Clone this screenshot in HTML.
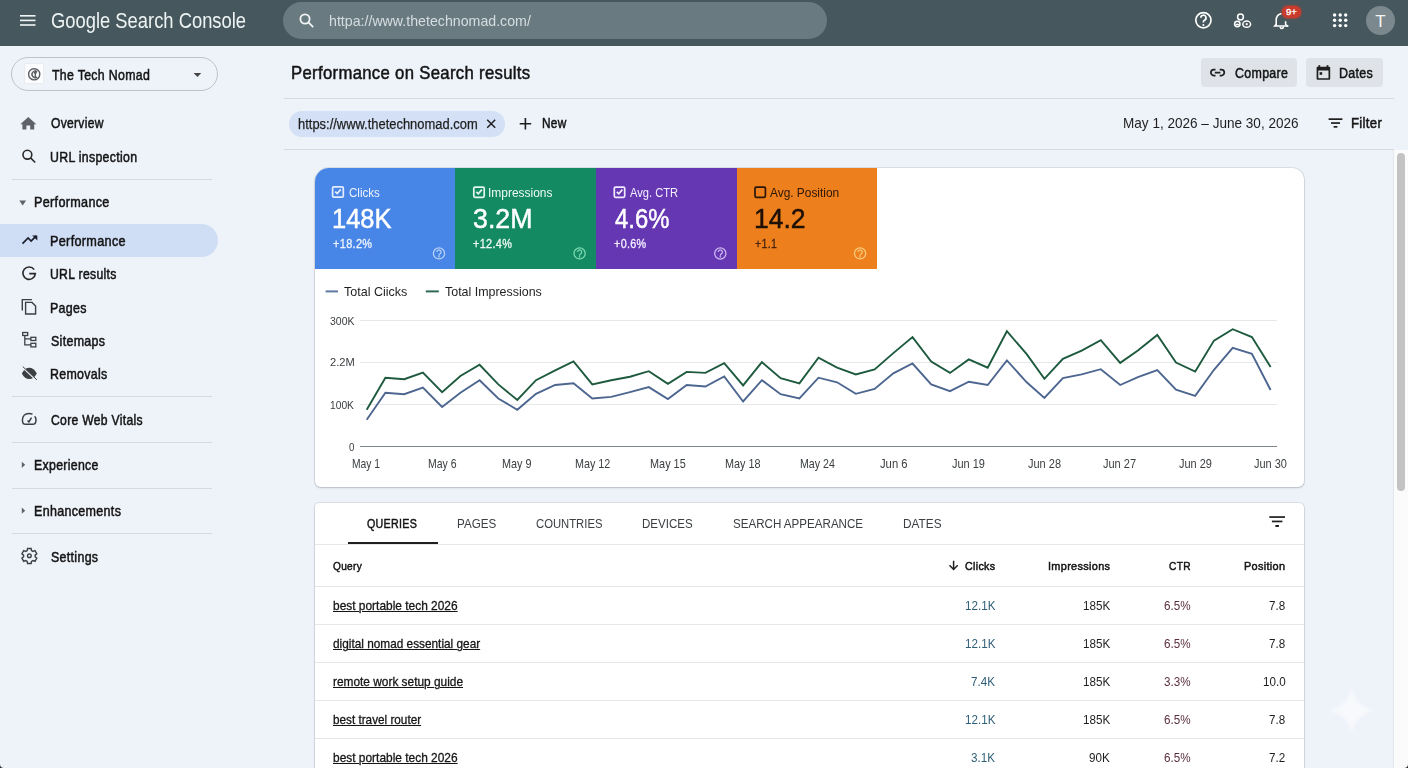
<!DOCTYPE html>
<html><head><meta charset="utf-8">
<style>
*{box-sizing:border-box;margin:0;padding:0}
html,body{width:1408px;height:768px;overflow:hidden}
body{background:#eef2f9;font-family:"Liberation Sans",sans-serif;color:#1f1f1f;position:relative}
.b{position:absolute}
.t{position:absolute;white-space:nowrap;transform-origin:0 0}
.dv{position:absolute;height:1px;background:#d6d9de}
.rl{position:absolute;left:315px;width:989px;height:1px;background:#e6e6e6}
#ov{position:absolute;left:0;top:0}
</style></head><body>
<!-- top bar -->
<div class="b" style="left:0;top:0;width:1408px;height:46px;background:#46585e"></div>
<div class="b" style="left:283px;top:2px;width:544px;height:37px;border-radius:18.5px;background:#697b80"></div>
<div class="b" style="left:1282px;top:5.5px;width:19px;height:12.5px;border-radius:6.5px;background:#c93b2d;box-shadow:0 0 1.5px 1px rgba(201,59,45,.6)"></div>
<div class="b" style="left:1366px;top:6px;width:29px;height:29px;border-radius:50%;background:#7b898e"></div>

<!-- sidebar -->
<div class="b" style="left:11px;top:57px;width:207px;height:34px;border:1px solid #bfc3c8;border-radius:17px"></div>
<div class="b" style="left:25px;top:64px;width:18px;height:19px;background:#fbfcfe;box-shadow:0 0 0 .5px #e4e7ec"></div>
<div class="b" style="left:0;top:224px;width:218px;height:33px;background:#d0def5;border-radius:0 16.5px 16.5px 0"></div>
<div class="dv" style="left:12px;top:179px;width:200px"></div>
<div class="dv" style="left:12px;top:396px;width:200px"></div>
<div class="dv" style="left:12px;top:442px;width:200px"></div>
<div class="dv" style="left:12px;top:488px;width:200px"></div>
<div class="dv" style="left:12px;top:533px;width:200px"></div>

<!-- header -->
<div class="b" style="left:1200.5px;top:58.3px;width:96px;height:29px;background:#dfe3e8;border-radius:4px"></div>
<div class="b" style="left:1306px;top:58.3px;width:76.5px;height:29px;background:#dfe3e8;border-radius:4px"></div>
<div class="dv" style="left:284px;top:98px;width:1110px"></div>
<div class="b" style="left:289px;top:111px;width:216px;height:26px;background:#d3e0f5;border-radius:13px"></div>
<div class="dv" style="left:284px;top:149px;width:1110px"></div>

<!-- scrollbar -->
<div class="b" style="left:1393px;top:150px;width:15px;height:618px;background:#fbfbfb;border-left:1px solid #e4e6e9"></div>
<div class="b" style="left:1397px;top:153px;width:8px;height:338px;background:#c3c3c3;border-radius:4px"></div>

<!-- chart card -->
<div class="b" style="left:315px;top:168px;width:989px;height:319px;background:#fff;border-radius:14px 12px 6px 6px;box-shadow:0 0 0 1px rgba(60,64,67,.10),0 1px 2px rgba(60,64,67,.22);overflow:hidden">
  <div class="b" style="left:0;top:0;width:140px;height:101px;background:#4785e6"></div>
  <div class="b" style="left:140px;top:0;width:141px;height:101px;background:#138a62"></div>
  <div class="b" style="left:281px;top:0;width:141px;height:101px;background:#6537b3"></div>
  <div class="b" style="left:422px;top:0;width:140px;height:101px;background:#ed7f1c"></div>
</div>

<!-- table card -->
<div class="b" style="left:315px;top:503px;width:989px;height:300px;background:#fff;border-radius:4px 5px 0 0;box-shadow:0 0 0 1px rgba(60,64,67,.10),0 1px 2px rgba(60,64,67,.22)"></div>
<div class="b" style="left:348px;top:541.6px;width:90px;height:2.6px;background:#1f1f1f"></div>
<div class="rl" style="top:544px"></div>
<div class="rl" style="top:586px"></div>
<div class="rl" style="top:624px"></div>
<div class="rl" style="top:662px"></div>
<div class="rl" style="top:700px"></div>
<div class="rl" style="top:738px"></div>

<div class="t" style="left:50.87px;top:9.98px;font-size:22.24px;line-height:22.24px;font-weight:normal;color:#eef3f3;transform:scaleX(0.8262);">Google Search Console</div>
<div class="t" style="left:329.38px;top:12.86px;font-size:15.41px;line-height:15.41px;font-weight:normal;color:#d6dde0;transform:scaleX(0.9208);">httpa://www.thetechnomad.com/</div>
<div class="t" style="left:52.30px;top:67.74px;font-size:14.24px;line-height:14.24px;font-weight:normal;color:#141414;transform:scaleX(0.8677);-webkit-text-stroke:0.5px #141414;letter-spacing:0.35px;">The Tech Nomad</div>
<div class="t" style="left:50.65px;top:116.30px;font-size:14.53px;line-height:14.53px;font-weight:normal;color:#141414;transform:scaleX(0.8328);-webkit-text-stroke:0.5px #141414;letter-spacing:0.35px;">Overview</div>
<div class="t" style="left:49.80px;top:149.80px;font-size:14.53px;line-height:14.53px;font-weight:normal;color:#141414;transform:scaleX(0.8493);-webkit-text-stroke:0.5px #141414;letter-spacing:0.35px;">URL inspection</div>
<div class="t" style="left:34.19px;top:195.69px;font-size:13.95px;line-height:13.95px;font-weight:normal;color:#141414;transform:scaleX(0.9051);-webkit-text-stroke:0.5px #141414;letter-spacing:0.35px;">Performance</div>
<div class="t" style="left:49.80px;top:233.87px;font-size:14.10px;line-height:14.10px;font-weight:normal;color:#141414;transform:scaleX(0.8984);-webkit-text-stroke:0.5px #141414;letter-spacing:0.35px;">Performance</div>
<div class="t" style="left:49.83px;top:266.97px;font-size:14.10px;line-height:14.10px;font-weight:normal;color:#141414;transform:scaleX(0.8658);-webkit-text-stroke:0.5px #141414;letter-spacing:0.35px;">URL results</div>
<div class="t" style="left:49.82px;top:300.57px;font-size:14.10px;line-height:14.10px;font-weight:normal;color:#141414;transform:scaleX(0.8838);-webkit-text-stroke:0.5px #141414;letter-spacing:0.35px;">Pages</div>
<div class="t" style="left:50.70px;top:333.57px;font-size:14.10px;line-height:14.10px;font-weight:normal;color:#141414;transform:scaleX(0.8822);-webkit-text-stroke:0.5px #141414;letter-spacing:0.35px;">Sitemaps</div>
<div class="t" style="left:49.82px;top:366.77px;font-size:14.10px;line-height:14.10px;font-weight:normal;color:#141414;transform:scaleX(0.8797);-webkit-text-stroke:0.5px #141414;letter-spacing:0.35px;">Removals</div>
<div class="t" style="left:50.70px;top:412.77px;font-size:14.10px;line-height:14.10px;font-weight:normal;color:#141414;transform:scaleX(0.8627);-webkit-text-stroke:0.5px #141414;letter-spacing:0.35px;">Core Web Vitals</div>
<div class="t" style="left:33.73px;top:458.47px;font-size:14.10px;line-height:14.10px;font-weight:normal;color:#141414;transform:scaleX(0.8742);-webkit-text-stroke:0.5px #141414;letter-spacing:0.35px;">Experience</div>
<div class="t" style="left:33.71px;top:504.27px;font-size:14.10px;line-height:14.10px;font-weight:normal;color:#141414;transform:scaleX(0.8881);-webkit-text-stroke:0.5px #141414;letter-spacing:0.35px;">Enhancements</div>
<div class="t" style="left:50.70px;top:549.57px;font-size:14.10px;line-height:14.10px;font-weight:normal;color:#141414;transform:scaleX(0.8821);-webkit-text-stroke:0.5px #141414;letter-spacing:0.35px;">Settings</div>
<div class="t" style="left:290.88px;top:64.32px;font-size:18.17px;line-height:18.17px;font-weight:normal;color:#141414;transform:scaleX(0.9197);-webkit-text-stroke:0.5px #141414;letter-spacing:0.35px;">Performance on Search results</div>
<div class="t" style="left:1234.50px;top:65.84px;font-size:14.24px;line-height:14.24px;font-weight:normal;color:#141414;transform:scaleX(0.8728);-webkit-text-stroke:0.5px #141414;letter-spacing:0.35px;">Compare</div>
<div class="t" style="left:1339.12px;top:65.84px;font-size:14.24px;line-height:14.24px;font-weight:normal;color:#141414;transform:scaleX(0.8754);-webkit-text-stroke:0.5px #141414;letter-spacing:0.35px;">Dates</div>
<div class="t" style="left:297.70px;top:116.74px;font-size:14.24px;line-height:14.24px;font-weight:normal;color:#1f1f1f;transform:scaleX(0.9084);-webkit-text-stroke:0.25px #1f1f1f">https://www.thetechnomad.com</div>
<div class="t" style="left:541.65px;top:116.99px;font-size:13.95px;line-height:13.95px;font-weight:normal;color:#141414;transform:scaleX(0.8521);-webkit-text-stroke:0.5px #141414;letter-spacing:0.35px;">New</div>
<div class="t" style="left:1122.69px;top:115.83px;font-size:14.97px;line-height:14.97px;font-weight:normal;color:#1f1f1f;transform:scaleX(0.9056);">May 1, 2026 – June 30, 2026</div>
<div class="t" style="left:1350.72px;top:115.83px;font-size:14.97px;line-height:14.97px;font-weight:normal;color:#141414;transform:scaleX(0.8816);-webkit-text-stroke:0.5px #141414;letter-spacing:0.35px;">Filter</div>
<div class="t" style="left:348.75px;top:185.98px;font-size:13.08px;line-height:13.08px;font-weight:normal;color:#eef4ff;transform:scaleX(0.8844);">Clicks</div>
<div class="t" style="left:332.40px;top:204.36px;font-size:28.34px;line-height:28.34px;font-weight:normal;color:#ffffff;transform:scaleX(0.8994);-webkit-text-stroke:0.5px #fff">148K</div>
<div class="t" style="left:332.65px;top:238.19px;font-size:12.06px;line-height:12.06px;font-weight:normal;color:#eef4ff;transform:scaleX(0.9102);-webkit-text-stroke:0.5px #eef4ff;letter-spacing:0.35px;-webkit-text-stroke-width:0.3px">+18.2%</div>
<div class="t" style="left:488.49px;top:185.98px;font-size:13.08px;line-height:13.08px;font-weight:normal;color:#eefaf4;transform:scaleX(0.9148);">Impressions</div>
<div class="t" style="left:472.80px;top:204.60px;font-size:28.05px;line-height:28.05px;font-weight:normal;color:#ffffff;transform:scaleX(0.9543);-webkit-text-stroke:0.5px #fff">3.2M</div>
<div class="t" style="left:473.40px;top:238.19px;font-size:12.06px;line-height:12.06px;font-weight:normal;color:#eefaf4;transform:scaleX(0.9044);-webkit-text-stroke:0.5px #eefaf4;letter-spacing:0.35px;-webkit-text-stroke-width:0.3px">+12.4%</div>
<div class="t" style="left:629.80px;top:186.23px;font-size:13.08px;line-height:13.08px;font-weight:normal;color:#f4efff;transform:scaleX(0.8500);">Avg. CTR</div>
<div class="t" style="left:614.50px;top:204.82px;font-size:27.62px;line-height:27.62px;font-weight:normal;color:#ffffff;transform:scaleX(0.8640);-webkit-text-stroke:0.5px #fff">4.6%</div>
<div class="t" style="left:614.00px;top:238.19px;font-size:12.06px;line-height:12.06px;font-weight:normal;color:#f4efff;transform:scaleX(0.8982);-webkit-text-stroke:0.5px #f4efff;letter-spacing:0.35px;-webkit-text-stroke-width:0.3px">+0.6%</div>
<div class="t" style="left:770.00px;top:186.23px;font-size:13.08px;line-height:13.08px;font-weight:normal;color:#2b1608;transform:scaleX(0.9087);">Avg. Position</div>
<div class="t" style="left:753.88px;top:204.82px;font-size:27.62px;line-height:27.62px;font-weight:normal;color:#1e1006;transform:scaleX(0.9607);-webkit-text-stroke:0.5px #1e1006">14.2</div>
<div class="t" style="left:754.70px;top:238.19px;font-size:12.06px;line-height:12.06px;font-weight:normal;color:#4a2410;transform:scaleX(0.8833);-webkit-text-stroke:0.5px #4a2410;letter-spacing:0.35px;-webkit-text-stroke-width:0.3px">+1.1</div>
<div class="t" style="left:344.30px;top:285.28px;font-size:13.37px;line-height:13.37px;font-weight:normal;color:#1f1f1f;transform:scaleX(0.9370);">Total Ciicks</div>
<div class="t" style="left:445.40px;top:285.28px;font-size:13.37px;line-height:13.37px;font-weight:normal;color:#1f1f1f;transform:scaleX(0.9313);">Total Impressions</div>
<div class="t" style="left:329.50px;top:315.55px;font-size:11.05px;line-height:11.05px;font-weight:normal;color:#3c4043;transform:scaleX(0.9468);">300K</div>
<div class="t" style="left:329.60px;top:357.45px;font-size:11.05px;line-height:11.05px;font-weight:normal;color:#3c4043;transform:scaleX(1.0068);">2.2M</div>
<div class="t" style="left:329.60px;top:399.65px;font-size:11.05px;line-height:11.05px;font-weight:normal;color:#3c4043;transform:scaleX(0.9278);">100K</div>
<div class="t" style="left:348.80px;top:441.65px;font-size:11.05px;line-height:11.05px;font-weight:normal;color:#3c4043;transform:scaleX(0.8833);">0</div>
<div class="t" style="left:352.00px;top:457.79px;font-size:12.06px;line-height:12.06px;font-weight:normal;color:#3c4043;transform:scaleX(0.8548);">May 1</div>
<div class="t" style="left:427.60px;top:457.79px;font-size:12.06px;line-height:12.06px;font-weight:normal;color:#3c4043;transform:scaleX(0.8699);">May 6</div>
<div class="t" style="left:502.20px;top:457.79px;font-size:12.06px;line-height:12.06px;font-weight:normal;color:#3c4043;transform:scaleX(0.9002);">May 9</div>
<div class="t" style="left:574.60px;top:457.79px;font-size:12.06px;line-height:12.06px;font-weight:normal;color:#3c4043;transform:scaleX(0.8944);">May 12</div>
<div class="t" style="left:649.70px;top:457.79px;font-size:12.06px;line-height:12.06px;font-weight:normal;color:#3c4043;transform:scaleX(0.9044);">May 15</div>
<div class="t" style="left:725.00px;top:457.79px;font-size:12.06px;line-height:12.06px;font-weight:normal;color:#3c4043;transform:scaleX(0.8994);">May 18</div>
<div class="t" style="left:800.40px;top:457.79px;font-size:12.06px;line-height:12.06px;font-weight:normal;color:#3c4043;transform:scaleX(0.8843);">May 24</div>
<div class="t" style="left:879.60px;top:457.79px;font-size:12.06px;line-height:12.06px;font-weight:normal;color:#3c4043;transform:scaleX(0.9338);">Jun 6</div>
<div class="t" style="left:952.30px;top:457.79px;font-size:12.06px;line-height:12.06px;font-weight:normal;color:#3c4043;transform:scaleX(0.9103);">Jun 19</div>
<div class="t" style="left:1027.70px;top:457.79px;font-size:12.06px;line-height:12.06px;font-weight:normal;color:#3c4043;transform:scaleX(0.9131);">Jun 28</div>
<div class="t" style="left:1103.10px;top:457.79px;font-size:12.06px;line-height:12.06px;font-weight:normal;color:#3c4043;transform:scaleX(0.9131);">Jun 27</div>
<div class="t" style="left:1178.60px;top:457.79px;font-size:12.06px;line-height:12.06px;font-weight:normal;color:#3c4043;transform:scaleX(0.9103);">Jun 29</div>
<div class="t" style="left:1254.00px;top:457.79px;font-size:12.06px;line-height:12.06px;font-weight:normal;color:#3c4043;transform:scaleX(0.9103);">Jun 30</div>
<div class="t" style="left:367.40px;top:517.23px;font-size:13.66px;line-height:13.66px;font-weight:normal;color:#141414;transform:scaleX(0.7832);-webkit-text-stroke:0.5px #141414;letter-spacing:0.35px;">QUERIES</div>
<div class="t" style="left:456.83px;top:517.48px;font-size:13.37px;line-height:13.37px;font-weight:normal;color:#3c4043;transform:scaleX(0.8701);">PAGES</div>
<div class="t" style="left:536.00px;top:517.48px;font-size:13.37px;line-height:13.37px;font-weight:normal;color:#3c4043;transform:scaleX(0.8443);">COUNTRIES</div>
<div class="t" style="left:642.24px;top:517.48px;font-size:13.37px;line-height:13.37px;font-weight:normal;color:#3c4043;transform:scaleX(0.8642);">DEVICES</div>
<div class="t" style="left:732.80px;top:517.48px;font-size:13.37px;line-height:13.37px;font-weight:normal;color:#3c4043;transform:scaleX(0.8674);">SEARCH APPEARANCE</div>
<div class="t" style="left:902.52px;top:517.48px;font-size:13.37px;line-height:13.37px;font-weight:normal;color:#3c4043;transform:scaleX(0.8842);">DATES</div>
<div class="t" style="left:333.20px;top:559.76px;font-size:11.63px;line-height:11.63px;font-weight:normal;color:#141414;transform:scaleX(0.8702);-webkit-text-stroke:0.5px #141414;letter-spacing:0.35px;">Query</div>
<div class="t" style="left:965.10px;top:559.76px;font-size:11.63px;line-height:11.63px;font-weight:normal;color:#141414;transform:scaleX(0.9179);-webkit-text-stroke:0.5px #141414;letter-spacing:0.35px;">Clicks</div>
<div class="t" style="left:1047.86px;top:559.76px;font-size:11.63px;line-height:11.63px;font-weight:normal;color:#141414;transform:scaleX(0.9375);-webkit-text-stroke:0.5px #141414;letter-spacing:0.35px;">Impressions</div>
<div class="t" style="left:1169.40px;top:559.76px;font-size:11.63px;line-height:11.63px;font-weight:normal;color:#141414;transform:scaleX(0.8728);-webkit-text-stroke:0.5px #141414;letter-spacing:0.35px;">CTR</div>
<div class="t" style="left:1244.40px;top:559.76px;font-size:11.63px;line-height:11.63px;font-weight:normal;color:#141414;transform:scaleX(0.9377);-webkit-text-stroke:0.5px #141414;letter-spacing:0.35px;">Position</div>
<div class="t" style="left:333.40px;top:600.25px;font-size:12.94px;line-height:12.94px;font-weight:normal;color:#151515;transform:scaleX(0.9216);text-decoration:underline;text-underline-offset:1px;text-decoration-thickness:1px;-webkit-text-stroke:0.3px #151515">best portable tech 2026</div>
<div class="t" style="left:964.57px;top:600.25px;font-size:12.94px;line-height:12.94px;font-weight:normal;color:#2e5f78;transform:scaleX(0.9000);">12.1K</div>
<div class="t" style="left:1082.50px;top:600.25px;font-size:12.94px;line-height:12.94px;font-weight:normal;color:#1f1f1f;transform:scaleX(0.9000);">185K</div>
<div class="t" style="left:1163.53px;top:600.25px;font-size:12.94px;line-height:12.94px;font-weight:normal;color:#5c2f3c;transform:scaleX(0.9000);">6.5%</div>
<div class="t" style="left:1269.00px;top:600.25px;font-size:12.94px;line-height:12.94px;font-weight:normal;color:#1f1f1f;transform:scaleX(0.9000);">7.8</div>
<div class="t" style="left:333.40px;top:638.25px;font-size:12.94px;line-height:12.94px;font-weight:normal;color:#151515;transform:scaleX(0.9134);text-decoration:underline;text-underline-offset:1px;text-decoration-thickness:1px;-webkit-text-stroke:0.3px #151515">digital nomad essential gear</div>
<div class="t" style="left:964.57px;top:638.25px;font-size:12.94px;line-height:12.94px;font-weight:normal;color:#2e5f78;transform:scaleX(0.9000);">12.1K</div>
<div class="t" style="left:1082.50px;top:638.25px;font-size:12.94px;line-height:12.94px;font-weight:normal;color:#1f1f1f;transform:scaleX(0.9000);">185K</div>
<div class="t" style="left:1163.53px;top:638.25px;font-size:12.94px;line-height:12.94px;font-weight:normal;color:#5c2f3c;transform:scaleX(0.9000);">6.5%</div>
<div class="t" style="left:1269.00px;top:638.25px;font-size:12.94px;line-height:12.94px;font-weight:normal;color:#1f1f1f;transform:scaleX(0.9000);">7.8</div>
<div class="t" style="left:333.40px;top:676.25px;font-size:12.94px;line-height:12.94px;font-weight:normal;color:#151515;transform:scaleX(0.9178);text-decoration:underline;text-underline-offset:1px;text-decoration-thickness:1px;-webkit-text-stroke:0.3px #151515">remote work setup guide</div>
<div class="t" style="left:971.03px;top:676.25px;font-size:12.94px;line-height:12.94px;font-weight:normal;color:#2e5f78;transform:scaleX(0.9000);">7.4K</div>
<div class="t" style="left:1082.50px;top:676.25px;font-size:12.94px;line-height:12.94px;font-weight:normal;color:#1f1f1f;transform:scaleX(0.9000);">185K</div>
<div class="t" style="left:1163.53px;top:676.25px;font-size:12.94px;line-height:12.94px;font-weight:normal;color:#5c2f3c;transform:scaleX(0.9000);">3.3%</div>
<div class="t" style="left:1262.53px;top:676.25px;font-size:12.94px;line-height:12.94px;font-weight:normal;color:#1f1f1f;transform:scaleX(0.9000);">10.0</div>
<div class="t" style="left:333.40px;top:714.25px;font-size:12.94px;line-height:12.94px;font-weight:normal;color:#151515;transform:scaleX(0.9073);text-decoration:underline;text-underline-offset:1px;text-decoration-thickness:1px;-webkit-text-stroke:0.3px #151515">best travel router</div>
<div class="t" style="left:964.57px;top:714.25px;font-size:12.94px;line-height:12.94px;font-weight:normal;color:#2e5f78;transform:scaleX(0.9000);">12.1K</div>
<div class="t" style="left:1082.50px;top:714.25px;font-size:12.94px;line-height:12.94px;font-weight:normal;color:#1f1f1f;transform:scaleX(0.9000);">185K</div>
<div class="t" style="left:1163.53px;top:714.25px;font-size:12.94px;line-height:12.94px;font-weight:normal;color:#5c2f3c;transform:scaleX(0.9000);">6.5%</div>
<div class="t" style="left:1269.00px;top:714.25px;font-size:12.94px;line-height:12.94px;font-weight:normal;color:#1f1f1f;transform:scaleX(0.9000);">7.8</div>
<div class="t" style="left:333.40px;top:752.25px;font-size:12.94px;line-height:12.94px;font-weight:normal;color:#151515;transform:scaleX(0.9216);text-decoration:underline;text-underline-offset:1px;text-decoration-thickness:1px;-webkit-text-stroke:0.3px #151515">best portable tech 2026</div>
<div class="t" style="left:971.03px;top:752.25px;font-size:12.94px;line-height:12.94px;font-weight:normal;color:#2e5f78;transform:scaleX(0.9000);">3.1K</div>
<div class="t" style="left:1088.96px;top:752.25px;font-size:12.94px;line-height:12.94px;font-weight:normal;color:#1f1f1f;transform:scaleX(0.9000);">90K</div>
<div class="t" style="left:1163.53px;top:752.25px;font-size:12.94px;line-height:12.94px;font-weight:normal;color:#5c2f3c;transform:scaleX(0.9000);">6.5%</div>
<div class="t" style="left:1269.00px;top:752.25px;font-size:12.94px;line-height:12.94px;font-weight:normal;color:#1f1f1f;transform:scaleX(0.9000);">7.2</div>

<svg id="ov" width="1408" height="768" viewBox="0 0 1408 768">
<!-- hamburger -->
<g fill="#f2f5f5"><rect x="20" y="15" width="15.5" height="1.6"/><rect x="20" y="19.6" width="15.5" height="1.6"/><rect x="20" y="24.2" width="15.5" height="1.6"/></g>
<!-- search -->
<g fill="none" stroke="#f2f5f5" stroke-width="1.8"><circle cx="305" cy="19" r="4.6"/><path d="M308.4 22.4l4.8 4.8"/></g>
<!-- help -->
<g fill="none" stroke="#fff" stroke-width="1.7"><circle cx="1203.4" cy="20.2" r="7.6"/><path d="M1200.8 17.8a2.6 2.6 0 1 1 3.6 2.4c-.8.4-1 1-1 1.8v.6"/></g>
<circle cx="1203.4" cy="25" r="1" fill="#fff"/>
<!-- admin -->
<g fill="none" stroke="#fff" stroke-width="1.5"><circle cx="1240.5" cy="17" r="2.9"/><circle cx="1237.3" cy="24" r="2.7"/><ellipse cx="1246.7" cy="24.2" rx="3.9" ry="3.1"/></g>
<path d="M1235.3 25.2a2 1.6 0 0 1 4 0z" fill="#fff"/>
<circle cx="1246.7" cy="24.2" r="1.1" fill="#fff"/>
<!-- bell -->
<g fill="none" stroke="#fff" stroke-width="1.6" stroke-linecap="round"><path d="M1280.8 13.8c-2.8.8-4.6 3.4-4.6 6.4v4.2l-1.4 1.6h13"/><path d="M1285.6 21.8v2.6l1.8 1.6"/><path d="M1280.3 27.4a1.6 1.6 0 0 0 3 0"/></g>
<!-- apps -->
<g fill="#fff"><circle cx="1334.6" cy="15" r="1.7"/><circle cx="1340.2" cy="15" r="1.7"/><circle cx="1345.7" cy="15" r="1.7"/><circle cx="1334.6" cy="20.3" r="1.7"/><circle cx="1340.2" cy="20.3" r="1.7"/><circle cx="1345.7" cy="20.3" r="1.7"/><circle cx="1334.6" cy="25.6" r="1.7"/><circle cx="1340.2" cy="25.6" r="1.7"/><circle cx="1345.7" cy="25.6" r="1.7"/></g>
<!-- 9+ -->
<text x="1291.3" y="15.2" font-family="Liberation Sans" font-size="9.5" fill="#fff" stroke="#fff" stroke-width="0.35" text-anchor="middle">9+</text>
<!-- avatar T -->
<text x="1380.5" y="26.5" font-family="Liberation Sans" font-size="17" fill="#f4f6f6" text-anchor="middle">T</text>

<!-- property globe -->
<g fill="none" stroke="#5a5d61" stroke-width="1.4"><circle cx="34.2" cy="74.3" r="5.6"/><path d="M37.2 71.6a3.3 3.3 0 1 0 0 5.4"/><path d="M35.3 70.6v7.2M33.8 72.8h3"/></g>
<path d="M193.6 72.9h7.7l-3.85 4.1z" fill="#444"/>
<!-- overview home -->
<path d="M22.4 129.5v-5.2h-2.1l8-7.2 8 7.2h-2.1v5.2h-4v-4h-3.8v4z" fill="#5f6368"/>
<!-- url inspection search -->
<g fill="none" stroke="#2a2a2a" stroke-width="1.6"><circle cx="27.4" cy="154.7" r="4.4"/><path d="M30.6 157.9l4.6 4.6"/></g>
<!-- performance triangles -->
<path d="M19.3 200.5h6.8l-3.4 4.9z" fill="#5f6368"/>
<!-- trend -->
<g fill="none" stroke="#1a1f2b" stroke-width="1.7" stroke-linejoin="miter"><path d="M22.5 243.6l5.6-5.6 3 3 5.2-5.2"/></g>
<path d="M32.2 235.4h5.1v5.1z" fill="#1a1f2b"/>
<!-- G url results -->
<g fill="none" stroke="#2a2a2a" stroke-width="1.6"><path d="M34.2 269.6a6.2 6.2 0 1 0 1.1 4h-6"/></g>
<!-- pages -->
<g fill="none" stroke="#3c4043" stroke-width="1.4"><path d="M22.3 310.6V299.6h9.6"/><path d="M25.6 302.4h6.4l3.6 3.6v8h-10z"/></g>
<!-- sitemaps -->
<g fill="none" stroke="#3c4043" stroke-width="1.3"><rect x="22.7" y="332.5" width="5" height="3"/><rect x="30.9" y="337.3" width="4.9" height="3.2"/><rect x="30.9" y="343.3" width="4.9" height="3.6"/><path d="M24.8 335.5v9.3h6.1M24.8 338.9h6.1"/></g>
<!-- removals -->
<path d="M21.8 373.4c2-3.6 4.5-5.6 7.5-5.6s5.5 2 7.5 5.6c-2 3.6-4.5 5.6-7.5 5.6s-5.5-2-7.5-5.6z" fill="#3c4043"/>
<path d="M22.2 367l14 13.2" stroke="#eef2f9" stroke-width="1.6"/>
<path d="M22.8 366.6l14 13.2" stroke="#3c4043" stroke-width="1"/>
<!-- CWV -->
<g fill="none" stroke="#3c4043" stroke-width="1.5"><path d="M32.5 414.2c-1-.5-2.3-.8-3.6-.8-3.9 0-6.5 2.8-6.5 6.8 0 2.6 1.3 4.1 3.2 4.1h7c2.3 0 3.4-1.6 3.4-4.1 0-1.6-.5-2.9-1.3-3.9"/><path d="M27.6 420.5l1.3 1.5 2.6-4.4"/></g>
<!-- experience / enhancements triangles -->
<path d="M21.8 461.7v6.3l3.4-3.15z" fill="#5f6368"/>
<path d="M21.8 507.5v6.3l3.4-3.15z" fill="#5f6368"/>
<!-- gear -->
<g transform="translate(29.35 555.7) scale(0.68)" fill="none" stroke="#3c4043" stroke-width="2.1"><path d="M-2.6-10.6h5.2l.6 3.1 2.1 1.2 3-1.1 2.6 4.5-2.4 2.1v2.4l2.4 2.1-2.6 4.5-3-1.1-2.1 1.2-.6 3.1h-5.2l-.6-3.1-2.1-1.2-3 1.1-2.6-4.5 2.4-2.1v-2.4l-2.4-2.1 2.6-4.5 3 1.1 2.1-1.2z"/><circle r="2.7"/></g>

<!-- compare link -->
<g fill="none" stroke="#1f1f1f" stroke-width="1.7"><path d="M1215.5 69.6h-1.6a3 3 0 0 0 0 6h1.6M1219.7 69.6h1.6a3 3 0 0 1 0 6h-1.6M1214.8 72.6h5.6"/></g>
<!-- dates calendar -->
<g fill="#1f1f1f"><path d="M1317.6 66.8h11.6a1 1 0 0 1 1 1v11a1 1 0 0 1-1 1h-11.6a1 1 0 0 1-1-1v-11a1 1 0 0 1 1-1z M1318.3 70.6v7.7h10.2v-7.7z" fill-rule="evenodd"/><rect x="1318.4" y="65.2" width="1.8" height="2.5"/><rect x="1326.6" y="65.2" width="1.8" height="2.5"/><rect x="1319.6" y="72.2" width="2.6" height="2.6"/></g>
<!-- chip x -->
<path d="M487.2 119.7l8 8M495.2 119.7l-8 8" stroke="#1f1f1f" stroke-width="1.5"/>
<!-- plus -->
<path d="M525.4 118v11.5M519.7 123.75h11.5" stroke="#1f1f1f" stroke-width="1.6"/>
<!-- filter -->
<g fill="#1f1f1f"><rect x="1328.6" y="118.3" width="13.8" height="1.7"/><rect x="1331" y="122.2" width="9" height="1.7"/><rect x="1333.6" y="126" width="3.8" height="1.7"/></g>

<!-- tile checkboxes -->
<g fill="none" stroke="#e3edff" stroke-width="1.7"><rect x="332.6" y="186.9" width="10.7" height="10.3" rx="1.2"/><path d="M335.2 191.6l2 2 3.6-4.2"/></g>
<g fill="none" stroke="#e3f7ee" stroke-width="1.7"><rect x="473.8" y="187.1" width="10.4" height="10.2" rx="1.2"/><path d="M476.3 191.8l2 2 3.6-4.2"/></g>
<g fill="none" stroke="#f1eaff" stroke-width="1.7"><rect x="614.3" y="187.1" width="10.4" height="10.2" rx="1.2"/><path d="M616.8 191.8l2 2 3.6-4.2"/></g>
<g fill="none" stroke="#2b1608" stroke-width="1.7"><rect x="755" y="187.1" width="10.4" height="10.2" rx="1.2"/></g>
<!-- tile ? -->
<g transform="translate(439 253.4)" fill="none" stroke="#b9d2f8" stroke-width="1.25"><circle r="5.6"/><path d="M-2.1-1.4a2.1 2.1 0 1 1 3.2 1.8c-.9.5-1.1 1-1.1 1.9"/><circle cy="3.3" r=".55" fill="#b9d2f8" stroke-width=".6"/></g>
<g transform="translate(579.6 253.4)" fill="none" stroke="#7fdcb5" stroke-width="1.25"><circle r="5.6"/><path d="M-2.1-1.4a2.1 2.1 0 1 1 3.2 1.8c-.9.5-1.1 1-1.1 1.9"/><circle cy="3.3" r=".55" fill="#7fdcb5" stroke-width=".6"/></g>
<g transform="translate(720.3 253.5)" fill="none" stroke="#cdb8f2" stroke-width="1.25"><circle r="5.6"/><path d="M-2.1-1.4a2.1 2.1 0 1 1 3.2 1.8c-.9.5-1.1 1-1.1 1.9"/><circle cy="3.3" r=".55" fill="#cdb8f2" stroke-width=".6"/></g>
<g transform="translate(860.1 253.4)" fill="none" stroke="#f9cd7e" stroke-width="1.25"><circle r="5.6"/><path d="M-2.1-1.4a2.1 2.1 0 1 1 3.2 1.8c-.9.5-1.1 1-1.1 1.9"/><circle cy="3.3" r=".55" fill="#f9cd7e" stroke-width=".6"/></g>
<!-- legend lines -->
<rect x="325.6" y="290.4" width="12.4" height="2" fill="#5d7ba3"/>
<rect x="425.8" y="290.4" width="13" height="2" fill="#2e6a52"/>
<!-- grid -->
<g stroke="#e8e8e8" stroke-width="1"><line x1="360" y1="320.5" x2="1277" y2="320.5"/><line x1="360" y1="362.5" x2="1277" y2="362.5"/><line x1="360" y1="404.5" x2="1277" y2="404.5"/></g>
<line x1="360" y1="446.5" x2="1277" y2="446.5" stroke="#7f868b" stroke-width="1"/>
<g transform="translate(315 168)">
<polyline points="51.7,241.8 70.4,209.7 89.2,211.2 107.9,204.7 127.1,224.1 145.4,208.0 164.6,196.8 183.3,216.4 202.3,232.0 221.0,212.2 240.2,202.4 258.5,193.5 277.3,216.4 296.2,212.2 315.0,208.7 333.8,203.2 352.9,215.8 371.7,203.9 390.4,204.9 409.2,195.1 428.1,217.4 446.9,194.1 465.6,210.1 484.4,215.3 503.5,189.7 522.1,199.7 540.8,206.4 559.6,201.4 578.3,185.1 597.5,169.1 616.2,193.5 635.0,204.9 653.8,191.4 672.7,199.7 691.9,163.2 711.7,186.2 729.4,210.8 747.9,190.8 766.7,182.6 785.8,172.2 805.2,194.9 822.9,182.6 842.3,167.0 861.0,194.5 880.2,203.5 899.0,172.6 917.7,161.2 936.9,169.1 955.6,199.1" fill="none" stroke="#1e5a3e" stroke-width="1.9" stroke-linejoin="miter"/>
<polyline points="51.7,251.8 70.4,224.7 89.2,226.2 107.9,219.5 127.1,238.9 145.4,224.7 164.6,212.2 183.3,230.5 202.3,241.8 221.0,225.8 240.2,217.0 258.5,215.3 277.3,230.5 296.2,228.9 315.0,224.1 333.8,219.1 352.9,231.0 371.7,217.0 390.4,218.5 409.2,208.5 428.1,233.5 446.9,212.2 465.6,226.2 484.4,230.5 503.5,209.7 522.1,214.3 540.8,225.8 559.6,221.0 578.3,205.3 597.5,195.5 616.2,216.4 635.0,223.2 653.8,213.7 672.7,217.0 691.9,192.4 711.7,214.3 729.4,229.9 747.9,210.1 766.7,206.4 785.8,201.2 805.2,217.0 822.9,209.1 842.3,202.2 861.0,221.6 880.2,227.8 899.0,201.8 917.7,179.9 936.9,185.8 955.6,222.0" fill="none" stroke="#4d6690" stroke-width="1.9" stroke-linejoin="miter"/>
</g>
<!-- table filter -->
<g fill="#1f1f1f"><rect x="1269.3" y="516.2" width="15.7" height="1.7"/><rect x="1271.9" y="520.6" width="10.5" height="1.7"/><rect x="1275.4" y="525" width="3.5" height="2"/></g>
<!-- sort arrow -->
<path d="M953.6 560.7v8.4M949.5 565.2l4.1 4.2 4.1-4.2" fill="none" stroke="#1f1f1f" stroke-width="1.5"/>
<!-- sparkle watermark -->
<filter id="bl" x="-20%" y="-20%" width="140%" height="140%"><feGaussianBlur stdDeviation="1.8"/></filter>
<path d="M1351.7 688Q1356 706 1375 710.6Q1356 715 1351.7 733Q1347 715 1328.5 710.6Q1347 706 1351.7 688z" fill="#ffffff" fill-opacity="0.5" filter="url(#bl)"/>
<!-- window corner artifacts -->
<path d="M0 764a4 4 0 0 0 4 4H0z" fill="#2a2a2a"/>
<path d="M1408 764a4 4 0 0 1-4 4h4z" fill="#2a2a2a"/>

</svg>
</body></html>
